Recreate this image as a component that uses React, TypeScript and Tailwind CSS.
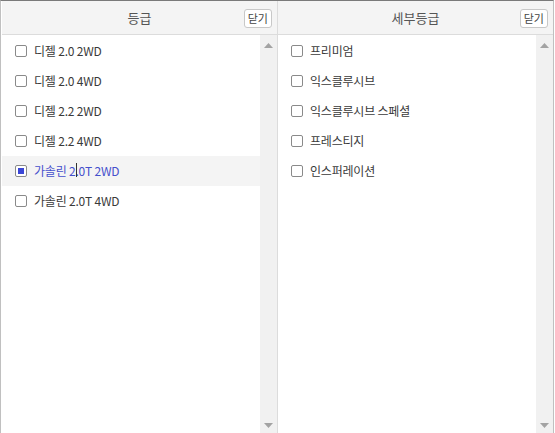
import React from "react";

const font = { fontFamily: '"Noto Sans CJK KR", "Noto Sans", sans-serif' };

function Check({ checked }: { checked?: boolean }) {
  return (
    <span className="flex h-[12px] w-[12px] shrink-0 items-center justify-center rounded-[2px] border border-[#8a8a8a] bg-white">
      {checked && <span className="h-[6px] w-[6px] bg-[#3b46d6]" />}
    </span>
  );
}

function Scrollbar() {
  return (
    <div className="flex w-[17px] shrink-0 flex-col items-center justify-between bg-[#f1f1f1] pt-[8px] pb-[5px]">
      <svg width="9" height="5" viewBox="0 0 9 5"><path d="M0 5 L4.5 0 L9 5 Z" fill="#a3a3a3" /></svg>
      <svg width="9" height="5" viewBox="0 0 9 5"><path d="M0 0 L9 0 L4.5 5 Z" fill="#a3a3a3" /></svg>
    </div>
  );
}

function Panel({ title, items, selected }: { title: string; items: React.ReactNode[]; selected?: number }) {
  return (
    <div className="flex min-w-0 flex-1 flex-col">
      <div className="relative flex h-[34px] shrink-0 items-center justify-center border-b border-[#dcdcdc] bg-[#f4f4f4]">
        <span className="text-[13px] text-[#555]">{title}</span>
        <button className="absolute right-[5px] top-[8px] h-[19px] rounded-[3px] border border-[#c8c8c8] bg-white px-[3px] text-[11px] leading-[17px] text-[#444]">
          닫기
        </button>
      </div>
      <div className="flex min-h-0 flex-1">
        <div className="flex-1 pl-[13px] pt-[1px]">
          {items.map((it, i) => (
            <div
              key={i}
              className={`flex h-[30px] items-center gap-[7px] ${
                selected === i ? "-ml-[13px] bg-[#f4f4f4] pl-[13px] text-[#4550cc]" : "text-[#3a3a3a]"
              }`}
            >
              <Check checked={selected === i} />
              <span className="text-[12px] tracking-[-0.2px]">{it}</span>
            </div>
          ))}
        </div>
        <Scrollbar />
      </div>
    </div>
  );
}

export default function App() {
  const left = [
    "디젤 2.0 2WD",
    "디젤 2.0 4WD",
    "디젤 2.2 2WD",
    "디젤 2.2 4WD",
    <span>
      가솔린 2<span className="relative">.<span className="absolute left-[1px] top-[1px] h-[14px] w-[1px] bg-[#333]" /></span>0T 2WD
    </span>,
    "가솔린 2.0T 4WD",
  ];
  const right = ["프리미엄", "익스클루시브", "익스클루시브 스페셜", "프레스티지", "인스퍼레이션"];
  return (
    <div style={font} className="h-[433px] w-[555px] bg-white">
      <div className="flex h-[433px] w-[554px] border-t border-l border-r border-[#7a7a7a] border-l-[#c0c0c0] border-r-[#c0c0c0] pl-[1px]">
        <Panel title="등급" items={left} selected={4} />
        <div className="w-[1px] shrink-0 bg-[#dcdcdc]" />
        <Panel title="세부등급" items={right} />
      </div>
    </div>
  );
}
